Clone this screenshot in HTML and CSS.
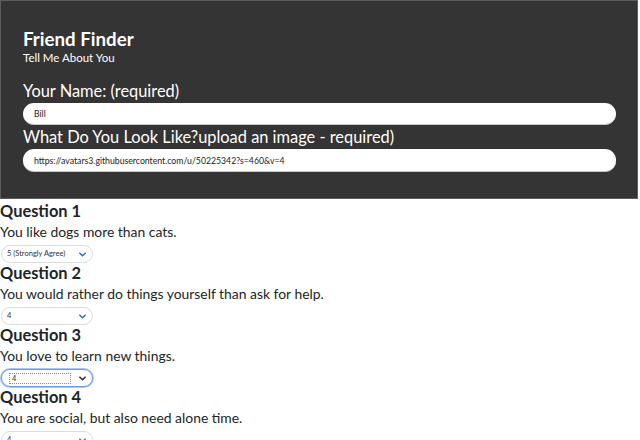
FILE: index.html
```html
<!DOCTYPE html>
<html>
<head>
<meta charset="utf-8">
<title>Friend Finder</title>
<link rel="stylesheet" href="styles.css">
</head>
<body>
<header class="banner">
  <h1 class="title">Friend Finder</h1>
  <p class="subtitle">Tell Me About You</p>
  <label class="field-label first" for="name">Your Name: (required)</label>
  <input class="field" id="name" type="text" value="Bill">
  <label class="field-label" for="photo">What Do You Look Like?upload an image - required)</label>
  <input class="field" id="photo" type="text" value="https://avatars3.githubusercontent.com/u/50225342?s=460&amp;v=4">
</header>
<main class="questions">
  <section class="question">
    <h4 class="q-title">Question 1</h4>
    <p class="q-text">You like dogs more than cats.</p>
    <div class="pick">
      <span class="pick-value">5 (Strongly Agree)</span>
      <svg class="chev" viewBox="0 0 8 5" width="7" height="5"><path d="M1 1 L4 4 L7 1" fill="none" stroke="#2f6fd6" stroke-width="1.8" stroke-linecap="round" stroke-linejoin="round"/></svg>
    </div>
  </section>
  <section class="question">
    <h4 class="q-title">Question 2</h4>
    <p class="q-text">You would rather do things yourself than ask for help.</p>
    <div class="pick">
      <span class="pick-value">4</span>
      <svg class="chev" viewBox="0 0 8 5" width="7" height="5"><path d="M1 1 L4 4 L7 1" fill="none" stroke="#2f6fd6" stroke-width="1.8" stroke-linecap="round" stroke-linejoin="round"/></svg>
    </div>
  </section>
  <section class="question">
    <h4 class="q-title">Question 3</h4>
    <p class="q-text">You love to learn new things.</p>
    <div class="pick pick-focus">
      <span class="pick-value pick-ring">4</span>
      <svg class="chev" viewBox="0 0 8 5" width="7" height="5"><path d="M1 1 L4 4 L7 1" fill="none" stroke="#333" stroke-width="1.8" stroke-linecap="round" stroke-linejoin="round"/></svg>
    </div>
  </section>
  <section class="question">
    <h4 class="q-title">Question 4</h4>
    <p class="q-text">You are social, but also need alone time.</p>
    <div class="pick">
      <span class="pick-value">4</span>
      <svg class="chev" viewBox="0 0 8 5" width="7" height="5"><path d="M1 1 L4 4 L7 1" fill="none" stroke="#2f6fd6" stroke-width="1.8" stroke-linecap="round" stroke-linejoin="round"/></svg>
    </div>
  </section>
</main>
</body>
</html>
```
FILE: styles.css
```css
html, body {
  margin: 0;
  padding: 0;
  background: #ffffff;
  font-family: Lato, "Open Sans", sans-serif;
  color: #212529;
}

.banner {
  box-sizing: border-box;
  width: 638px;
  height: 199px;
  background: #343434;
  border: 1px solid #5c5c5c;
  padding: 26px 21px 0 22px;
  display: flex;
  flex-direction: column;
  color: #ffffff;
}

.title {
  margin: 0;
  font-size: 18.7px;
  line-height: 24px;
  font-weight: 700;
}

.subtitle {
  margin: 0;
  font-size: 11.5px;
  line-height: 14px;
}

.field-label {
  font-size: 16.4px;
  line-height: 22px;
  margin-top: 1px;
}

.field-label.first {
  margin-top: 15px;
}

.field {
  box-sizing: border-box;
  width: 100%;
  height: 22px;
  margin: 1px 0 0;
  border: 0;
  border-bottom: 1px solid #c8c8c8;
  border-radius: 11px;
  background: #ffffff;
  padding: 0 10px 0 11px;
  font-family: Lato, "Open Sans", sans-serif;
  font-size: 8.7px;
  color: #222;
  outline: none;
}

#photo {
  height: 23px;
}

.questions {
  display: flex;
  flex-direction: column;
  padding-top: 2px;
}

.question {
  display: flex;
  flex-direction: column;
  align-items: flex-start;
  height: 62px;
}

.q-title {
  margin: 0;
  font-size: 16.4px;
  line-height: 20px;
  font-weight: 700;
  color: #212529;
}

.q-text {
  margin: 0 0 3px;
  font-size: 13.9px;
  line-height: 21px;
  color: #212529;
}

.pick {
  box-sizing: border-box;
  width: 92px;
  height: 18px;
  margin-left: 1px;
  border: 1px solid #dcdcdc;
  border-radius: 9px;
  display: flex;
  align-items: center;
  justify-content: space-between;
  padding: 0 6px 0 5px;
  background: #fff;
}

.pick-value {
  font-size: 7.5px;
  line-height: 10px;
  color: #333;
}

.pick-focus {
  border: 1px solid #6e9be6;
  box-shadow: 0 0 0 1px #a9c6f2;
  padding-left: 7px;
}

.pick-ring {
  width: 62px;
  height: 11px;
  box-sizing: border-box;
  border: 1px dotted #888;
  padding-left: 2px;
}

.chev {
  display: block;
}
```
